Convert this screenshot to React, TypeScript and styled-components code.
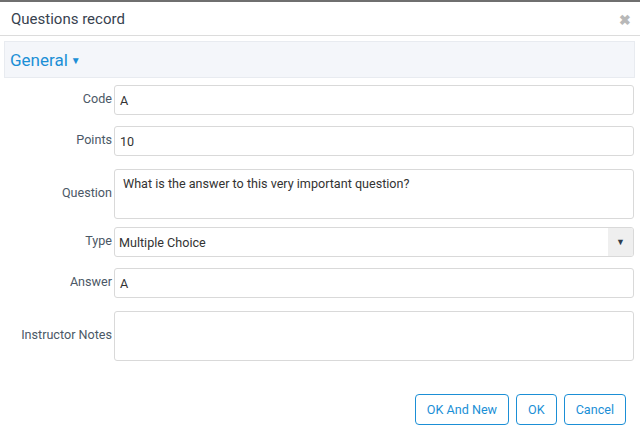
import * as React from 'react';
import styled, { createGlobalStyle } from 'styled-components';

const GlobalStyle = createGlobalStyle`
  html, body {
    margin: 0;
    padding: 0;
    background: #fff;
  }
  body {
    font-family: Roboto, "Liberation Sans", Arial, sans-serif;
    font-size: 12.6px;
    color: #333;
  }
`;

const Dialog = styled.div`
  width: 640px;
  height: 429px;
  box-sizing: border-box;
  border-top: 2px solid #6f6f6f;
  display: flex;
  flex-direction: column;
  background: #fff;
`;

const TitleBar = styled.div`
  height: 33px;
  display: flex;
  align-items: center;
  justify-content: space-between;
  padding: 0 11px;
  border-bottom: 1px solid #dcdcdc;
`;

const Title = styled.span`
  font-size: 15px;
  color: #37424f;
`;

const Close = styled.span`
  font-size: 14px;
  color: #b8b8b8;
  margin-right: -2px;
  margin-top: 3px;
  font-weight: bold;
`;

const Body = styled.div`
  flex: 1;
  display: flex;
  flex-direction: column;
  padding: 5px 5px 0 4px;
`;

const SectionHeader = styled.div`
  height: 35px;
  display: flex;
  align-items: center;
  padding-left: 5px;
  background: #f4f6fa;
  border: 1px solid #e8ebf0;
`;

const SectionTitle = styled.span`
  font-size: 17px;
  color: #1b8fd6;
`;

const Caret = styled.span`
  font-size: 10px;
  color: #1b8fd6;
  margin-left: 3px;
  margin-top: 2px;
`;

const Form = styled.div`
  display: flex;
  flex-direction: column;
  gap: 11px;
  padding-top: 7px;
  padding-right: 1px;
`;

const Row = styled.div<{ $top?: number }>`
  display: grid;
  grid-template-columns: 108px 1fr;
  column-gap: 2px;
  align-items: center;
  margin-top: ${p => p.$top ?? 0}px;
`;

const Label = styled.label`
  text-align: right;
  color: #4b5866;
  align-self: center;
  padding-bottom: 3px;
`;

const Input = styled.div`
  height: 30px;
  box-sizing: border-box;
  border: 1px solid #d9d9d9;
  border-radius: 3px;
  display: flex;
  align-items: center;
  padding: 1px 5px 0;
  color: #333;
`;

const TextArea = styled.div`
  height: 50px;
  box-sizing: border-box;
  border: 1px solid #d9d9d9;
  border-radius: 3px;
  padding: 6px 8px;
  color: #333;
`;

const Select = styled.div`
  height: 30px;
  box-sizing: border-box;
  border: 1px solid #d9d9d9;
  border-radius: 3px;
  display: flex;
  align-items: stretch;
  overflow: hidden;
`;

const SelectValue = styled.div`
  flex: 1;
  display: flex;
  align-items: center;
  padding: 0 4px;
  color: #333;
`;

const SelectButton = styled.div`
  width: 25px;
  background: #efefef;
  display: flex;
  align-items: center;
  justify-content: center;
  font-size: 9px;
  color: #2f3e4e;
`;

const Footer = styled.div`
  margin-top: auto;
  display: flex;
  justify-content: flex-end;
  gap: 7px;
  padding: 0 9px 4px 0;
`;

const Button = styled.button`
  height: 31px;
  box-sizing: border-box;
  padding: 0 11px;
  background: #fff;
  border: 1px solid #1b8fd6;
  border-radius: 4px;
  color: #1b8fd6;
  font-family: inherit;
  font-size: 12.6px;
`;

export default function App() {
  return (
    <>
      <GlobalStyle />
      <Dialog>
        <TitleBar>
          <Title>Questions record</Title>
          <Close>✖</Close>
        </TitleBar>
        <Body>
          <SectionHeader>
            <SectionTitle>General</SectionTitle>
            <Caret>▼</Caret>
          </SectionHeader>
          <Form>
            <Row>
              <Label>Code</Label>
              <Input>A</Input>
            </Row>
            <Row>
              <Label>Points</Label>
              <Input>10</Input>
            </Row>
            <Row $top={2}>
              <Label>Question</Label>
              <TextArea>What is the answer to this very important question?</TextArea>
            </Row>
            <Row $top={-3}>
              <Label>Type</Label>
              <Select>
                <SelectValue>Multiple Choice</SelectValue>
                <SelectButton>▼</SelectButton>
              </Select>
            </Row>
            <Row>
              <Label>Answer</Label>
              <Input>A</Input>
            </Row>
            <Row $top={2}>
              <Label>Instructor Notes</Label>
              <TextArea />
            </Row>
          </Form>
          <Footer>
            <Button>OK And New</Button>
            <Button>OK</Button>
            <Button>Cancel</Button>
          </Footer>
        </Body>
      </Dialog>
    </>
  );
}
